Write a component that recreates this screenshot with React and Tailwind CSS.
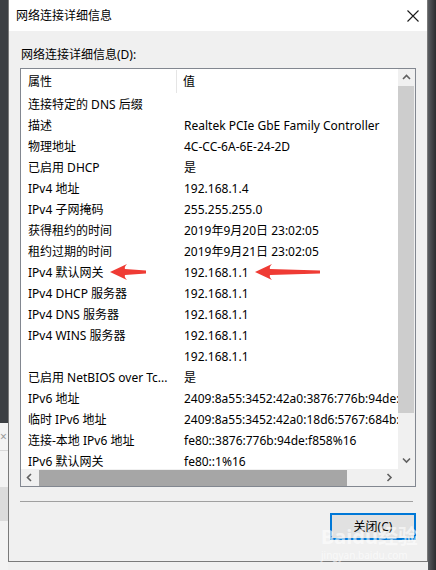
import React from "react";

const rows = [
  ["连接特定的 DNS 后缀", ""],
  ["描述", "Realtek PCIe GbE Family Controller"],
  ["物理地址", "4C-CC-6A-6E-24-2D"],
  ["已启用 DHCP", "是"],
  ["IPv4 地址", "192.168.1.4"],
  ["IPv4 子网掩码", "255.255.255.0"],
  ["获得租约的时间", "2019年9月20日 23:02:05"],
  ["租约过期的时间", "2019年9月21日 23:02:05"],
  ["IPv4 默认网关", "192.168.1.1"],
  ["IPv4 DHCP 服务器", "192.168.1.1"],
  ["IPv4 DNS 服务器", "192.168.1.1"],
  ["IPv4 WINS 服务器", "192.168.1.1"],
  ["", "192.168.1.1"],
  ["已启用 NetBIOS over Tc...", "是"],
  ["IPv6 地址", "2409:8a55:3452:42a0:3876:776b:94de:f858"],
  ["临时 IPv6 地址", "2409:8a55:3452:42a0:18d6:5767:684b:1a2c"],
  ["连接-本地 IPv6 地址", "fe80::3876:776b:94de:f858%16"],
  ["IPv6 默认网关", "fe80::1%16"],
];

const font = { fontFamily: '"Noto Sans", "Noto Sans CJK SC", sans-serif' };

function Chevron({ dir }) {
  const paths = {
    up: "M1 6 L4.5 2.5 L8 6",
    down: "M1 2.5 L4.5 6 L8 2.5",
    left: "M6 1 L2.5 4.5 L6 8",
    right: "M2.5 1 L6 4.5 L2.5 8",
  };
  return (
    <svg width="9" height="9" viewBox="0 0 9 9">
      <path d={paths[dir]} fill="none" stroke="#606060" strokeWidth="1.6" />
    </svg>
  );
}

function Arrow({ className, width }) {
  return (
    <svg className={className} width={width} height="16" viewBox={`0 0 ${width} 16`}>
      <path
        d={`M0 8 L17 0 Q14 3 15 5 L${width} 6.5 L${width} 9.5 L15 11 Q14 13 17 16 Z`}
        fill="#ef3b34"
      />
    </svg>
  );
}

export default function App() {
  return (
    <div className="w-[436px] h-[570px] flex overflow-hidden bg-[#f0f0f0] text-[12px] text-black" style={font}>
      {/* left background */}
      <div className="w-[8px] flex flex-col shrink-0">
        <div className="h-[423px] bg-[#3c3f43]" />
        <div className="flex-1 bg-[#f3f3f3] flex flex-col">
          <div className="h-[28px] border-b border-[#d8d8d8] text-[#9a9a9a] text-[12px] leading-[28px]">×</div>
          <div className="h-[36px]" />
          <div className="h-[34px] bg-[#dcdcdc]" />
        </div>
      </div>

      {/* dialog */}
      <div className="w-[420px] h-[562px] shrink-0 flex flex-col border-x border-b border-[#7a7a7a] relative">
        {/* title bar */}
        <div className="h-[31px] bg-white flex items-center justify-between pl-[7px] pr-[8px]">
          <span className="text-[12px] leading-none">网络连接详细信息</span>
          <svg width="12" height="12" viewBox="0 0 12 12">
            <path d="M0.5 0.5 L11.5 11.5 M11.5 0.5 L0.5 11.5" stroke="#1a1a1a" strokeWidth="1.1" />
          </svg>
        </div>

        {/* body */}
        <div className="flex-1 bg-[#f0f0f0] flex flex-col px-[11px]">
          <div className="h-[37px] flex items-end pb-[7px] pl-[1px] leading-none">网络连接详细信息(D):</div>

          {/* list box */}
          <div className="w-[396px] h-[419px] border border-[#828790] bg-white grid grid-cols-[377px_17px] grid-rows-[400px_17px]">
            {/* content */}
            <div className="overflow-hidden relative">
              <div className="h-[25px] flex">
                <div className="w-[156px] shrink-0 pl-[7px] flex items-center border-r border-[#e5e5e5] my-[1px]">属性</div>
                <div className="pl-[6px] flex items-center">值</div>
              </div>
              {rows.map(([k, v], i) => (
                <div key={i} className="h-[21px] flex items-center whitespace-nowrap">
                  <div className="w-[156px] shrink-0 pl-[7px] overflow-hidden">{k}</div>
                  <div className="pl-[7px] shrink-0">{v}</div>
                </div>
              ))}
              <Arrow className="absolute left-[89px] top-[195px]" width={36} />
              <Arrow className="absolute left-[234px] top-[195px]" width={65} />
            </div>

            {/* vertical scrollbar */}
            <div className="bg-[#f0f0f0] flex flex-col items-center">
              <div className="h-[17px] flex items-center justify-center">
                <Chevron dir="up" />
              </div>
              <div className="flex-1 w-full flex flex-col">
                <div className="h-[327px] bg-[#cdcdcd] mr-[1px]" />
              </div>
              <div className="h-[17px] flex items-center justify-center">
                <Chevron dir="down" />
              </div>
            </div>

            {/* horizontal scrollbar */}
            <div className="bg-[#f0f0f0] flex items-center">
              <div className="w-[17px] flex items-center justify-center">
                <Chevron dir="left" />
              </div>
              <div className="w-[308px] h-[16px] bg-[#a6a6a6] ml-[1px]" />
              <div className="flex-1" />
              <div className="w-[17px] flex items-center justify-center">
                <Chevron dir="right" />
              </div>
            </div>
            <div className="bg-[#f0f0f0]" />
          </div>

          {/* separator */}
          <div className="mt-[14px] w-[393px] h-[1px] bg-[#a0a0a0]" />

          {/* button */}
          <div className="flex justify-end mt-[11px]">
            <div className="w-[86px] h-[27px] border-2 border-[#0078d7] bg-[#e1e1e1] flex items-center justify-center">
              关闭(C)
            </div>
          </div>
        </div>

        {/* watermark */}
        <div className="absolute left-[312px] top-[527px] text-white/60 leading-none pointer-events-none">
          <div className="text-[20px] font-bold">Baidu经验</div>
          <div className="text-[10px] mt-[3px]">jingyan.baidu.com</div>
        </div>
      </div>

      {/* right background */}
      <div className="w-[8px] shrink-0 bg-gradient-to-r from-[#5a5d61] to-[#2c2d30]" />
    </div>
  );
}
